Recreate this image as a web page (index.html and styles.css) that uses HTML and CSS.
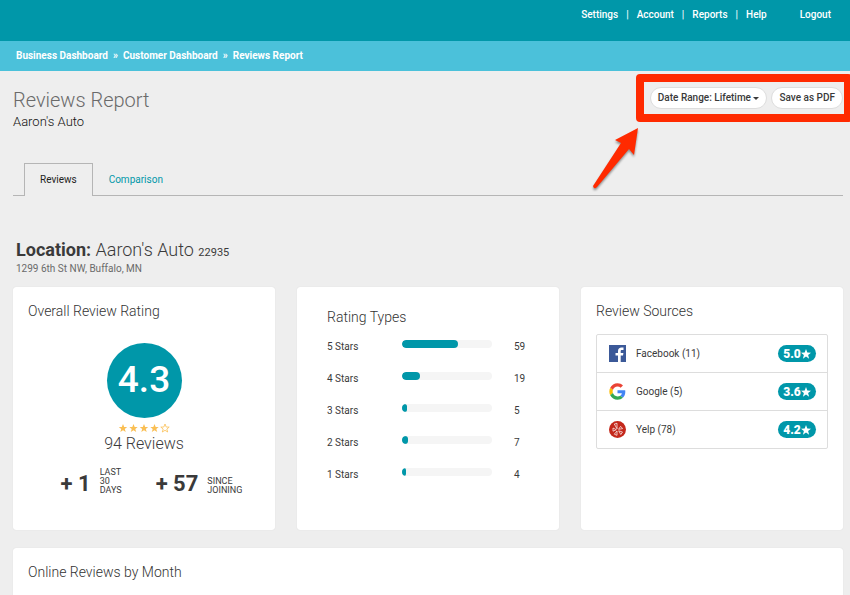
FILE: index.html
```html
<!DOCTYPE html>
<html lang="en">
<head>
  <meta charset="UTF-8">
  <meta name="viewport" content="width=device-width, initial-scale=1.0">
  <title>Reviews Report</title>
  <link rel="stylesheet" href="styles.css">
</head>
<body>
  <header class="topbar">
    <nav class="topnav">
      <a href="#">Settings</a><span>|</span>
      <a href="#">Account</a><span>|</span>
      <a href="#">Reports</a><span>|</span>
      <a href="#">Help</a>
    </nav>
    <a class="logout" href="#">Logout</a>
  </header>
  <nav class="breadcrumb">
    <a href="#">Business Dashboard</a><span>»</span>
    <a href="#">Customer Dashboard</a><span>»</span>
    <a href="#">Reviews Report</a>
  </nav>

  <main class="page">
    <div class="page-head">
      <div>
        <h1>Reviews Report</h1>
        <p class="business">Aaron's Auto</p>
      </div>
      <div class="actions">
        <button class="pill" type="button">Date Range: Lifetime <i class="caret"></i></button>
        <button class="pill" type="button">Save as PDF</button>
        <div class="highlight"></div>
        <svg class="arrow" width="54" height="70" viewBox="0 0 54 70">
          <path d="M49 3 L26 15 L32 18 L4 61 Q5 65 8 62 L40 24 L45 30 Z" fill="#ff2a00"/>
        </svg>
      </div>
    </div>

    <nav class="tabs">
      <a class="tab active" href="#">Reviews</a>
      <a class="tab" href="#">Comparison</a>
    </nav>

    <div class="location">
      <h2><b>Location:</b> Aaron's Auto <small>22935</small></h2>
      <p>1299 6th St NW, Buffalo, MN</p>
    </div>

    <div class="cards">
      <section class="card overall">
        <h3>Overall Review Rating</h3>
        <div class="score">4.3</div>
        <svg class="stars" width="52" height="10" viewBox="0 0 52 10">
          <defs>
            <path id="star" d="M5 1 L6.2 4 L9.2 4.1 L6.8 6 L7.7 9 L5 7.3 L2.3 9 L3.2 6 L0.8 4.1 L3.8 4 Z"/>
          </defs>
          <g fill="#fabf54">
            <use href="#star"/>
            <use href="#star" x="10.5"/>
            <use href="#star" x="21"/>
            <use href="#star" x="31.5"/>
          </g>
          <use href="#star" x="42" fill="none" stroke="#fabf54" stroke-width="0.8"/>
        </svg>
        <p class="total">94 Reviews</p>
        <div class="gains">
          <div class="gain"><strong>+ 1</strong><span>LAST<br>30<br>DAYS</span></div>
          <div class="gain"><strong>+ 57</strong><span>SINCE<br>JOINING</span></div>
        </div>
      </section>

      <section class="card types">
        <h3>Rating Types</h3>
        <table>
          <tr><th>5 Stars</th><td><div class="bar"><div style="width: 62%"></div></div></td><td>59</td></tr>
          <tr><th>4 Stars</th><td><div class="bar"><div style="width: 20%"></div></div></td><td>19</td></tr>
          <tr><th>3 Stars</th><td><div class="bar"><div style="width: 5%"></div></div></td><td>5</td></tr>
          <tr><th>2 Stars</th><td><div class="bar"><div style="width: 7%"></div></div></td><td>7</td></tr>
          <tr><th>1 Stars</th><td><div class="bar"><div style="width: 4%"></div></div></td><td>4</td></tr>
        </table>
      </section>

      <section class="card">
        <h3>Review Sources</h3>
        <ul class="sources">
          <li>
            <svg width="17" height="17" viewBox="0 0 17 17">
              <rect width="17" height="17" fill="#3b5998"/>
              <path d="M9 17 V10.5 H6.5 V8 H9 V6 C9 3.7 10.4 2.5 12.5 2.5 L14.5 2.6 V5 H13 C12 5 11.7 5.5 11.7 6.3 V8 H14.4 L14 10.5 H11.7 V17 Z" fill="#fff"/>
            </svg>
            <span class="name">Facebook (11)</span>
            <span class="badge">5.0<svg width="10" height="10" viewBox="0 0 10 10"><path d="M5 0 L6.3 3.5 L10 3.7 L7.1 6 L8.1 9.7 L5 7.6 L1.9 9.7 L2.9 6 L0 3.7 L3.7 3.5 Z" fill="#fff"/></svg></span>
          </li>
          <li>
            <svg width="17" height="17" viewBox="-1 -1 50 50">
              <path fill="#ea4335" d="M24 9.5c3.5 0 6.700 1.200 9.200 3.600l6.900-6.900C35.900 2.400 30.500 0 24 0 14.600 0 6.500 5.400 2.600 13.200l8 6.200C12.400 13.700 17.700 9.500 24 9.500z"/>
              <path fill="#4285f4" d="M47 24.500c0-1.600-.2-3.100-.4-4.500H24v9h12.900c-.6 3-2.200 5.500-4.700 7.200l7.700 6C44.400 38 47 31.800 47 24.500z"/>
              <path fill="#fbbc05" d="M10.500 28.600c-.5-1.500-.8-3-.8-4.600s.3-3.100.8-4.600l-8-6.200C.9 16.500 0 20.100 0 24s.9 7.500 2.600 10.800z"/>
              <path fill="#34a853" d="M24 48c6.500 0 11.900-2.100 15.900-5.800l-7.700-6c-2.200 1.500-4.900 2.300-8.200 2.300-6.300 0-11.600-4.200-13.500-9.900l-8 6.200C6.500 42.600 14.600 48 24 48z"/>
            </svg>
            <span class="name">Google (5)</span>
            <span class="badge">3.6<svg width="10" height="10" viewBox="0 0 10 10"><path d="M5 0 L6.3 3.5 L10 3.7 L7.1 6 L8.1 9.7 L5 7.6 L1.9 9.7 L2.9 6 L0 3.7 L3.7 3.5 Z" fill="#fff"/></svg></span>
          </li>
          <li>
            <svg width="17" height="17" viewBox="0 0 17 17">
              <circle cx="8.500" cy="8.500" r="8.500" fill="#c4281b"/>
              <g fill="none" stroke="#fff" stroke-width="0.7" stroke-linejoin="round">
                <path d="M5.300 3 L8 2.300 V7.800 Z"/>
                <path d="M4 7 L7.300 8.700 L4 10.200 Z"/>
                <path d="M8 10 V14.300 L5.300 13.200 Z"/>
                <path d="M9.700 9.800 L13.500 11 L11.800 13.500 Z"/>
                <path d="M9.600 8.300 L11.600 5.300 L13.600 7.600 Z"/>
              </g>
            </svg>
            <span class="name">Yelp (78)</span>
            <span class="badge">4.2<svg width="10" height="10" viewBox="0 0 10 10"><path d="M5 0 L6.3 3.5 L10 3.7 L7.1 6 L8.1 9.7 L5 7.6 L1.9 9.7 L2.9 6 L0 3.7 L3.7 3.5 Z" fill="#fff"/></svg></span>
          </li>
        </ul>
      </section>
    </div>

    <section class="card monthly">
      <h3>Online Reviews by Month</h3>
    </section>
  </main>
</body>
</html>
```
FILE: styles.css
```css
* {
  box-sizing: border-box;
  padding: 0;
  margin: 0;
}
body {
  display: flex;
  flex-direction: column;
  min-height: 100vh;
  overflow-x: hidden;
  background: #eee;
  color: #3a3a3a;
  font: 10px/16px Roboto, "Liberation Sans", sans-serif;
}
a {
  color: inherit;
  text-decoration: none;
}

/* header */
.topbar {
  display: flex;
  justify-content: flex-end;
  gap: 33px;
  height: 41px;
  padding: 7px 19px 0 0;
  background: #0097a9;
  color: #fff;
  font-weight: 500;
}
.topnav {
  display: flex;
  gap: 8px;
}
.breadcrumb {
  display: flex;
  align-items: center;
  gap: 5px;
  height: 30px;
  padding-left: 16px;
  background: #4bc1da;
  color: #fff;
  font-weight: 700;
}

.page {
  display: flex;
  flex-direction: column;
  flex: 1;
  padding: 16px 7px 0 13px;
}
.page-head {
  display: flex;
  justify-content: space-between;
  height: 76px;
}
h1 {
  color: #6a6a6a;
  font-size: 20px;
  font-weight: 300;
  line-height: 27px;
}
.business {
  color: #111;
  font-size: 13px;
  font-weight: 300;
}
.actions {
  position: relative;
  display: flex;
  align-items: flex-start;
  gap: 4px;
}
.pill {
  height: 22px;
  padding: 0 7px;
  border: 1px solid #ddd;
  border-radius: 11px;
  background: #fff;
  color: #3a3a3a;
  font: 500 10px/16px Roboto, "Liberation Sans", sans-serif;
}
.caret {
  display: inline-block;
  border: 3px solid transparent;
  border-top-color: #3a3a3a;
  border-bottom: 0;
  vertical-align: middle;
}
.highlight {
  position: absolute;
  top: -13px;
  left: -14px;
  right: -9px;
  height: 48px;
  border: 8px solid #ff2a00;
  border-radius: 4px;
  pointer-events: none;
}
.arrow {
  position: absolute;
  top: 38px;
  left: -61px;
  filter: drop-shadow(0 2px 1px rgba(0, 0, 0, .4));
}

.tabs {
  display: flex;
  height: 33px;
  padding-left: 11px;
  border-bottom: 1px solid #b5b5b5;
}
.tab {
  height: 33px;
  padding: 9px 16px 0;
  color: #0097a9;
}
.tab.active {
  padding: 8px 15px 0;
  border: 1px solid #b5b5b5;
  border-bottom: 0;
  background: #eee;
  color: #222;
}

.location {
  padding: 42px 3px 12px;
  color: #6a6a6a;
}
h2 {
  color: #3a3a3a;
  font-size: 18px;
  font-weight: 300;
  line-height: 24px;
}
h2 b {
  font-weight: 700;
}
h2 small {
  font-size: 11px;
  font-weight: 400;
  line-height: 11px;
}
.location p {
  line-height: 13px;
}

/* cards */
.cards {
  display: grid;
  grid-template-columns: repeat(3, 1fr);
  gap: 22px;
  margin-bottom: 18px;
}
.card {
  min-height: 243px;
  padding: 15px;
  border-radius: 3px;
  background: #fff;
  box-shadow: 0 0 1px rgba(0, 0, 0, .15);
}
h3 {
  color: #333;
  font-size: 14px;
  font-weight: 300;
  line-height: 18px;
}
.overall {
  display: flex;
  flex-direction: column;
  align-items: center;
}
.overall h3 {
  align-self: flex-start;
}
.score {
  width: 75px;
  height: 75px;
  margin: 23px 0 5px;
  border-radius: 50%;
  background: #0097a9;
  color: #fff;
  font-size: 37px;
  font-weight: 500;
  line-height: 73px;
  text-align: center;
}
.total {
  margin: 1px 0 14px;
  font-size: 16px;
  font-weight: 300;
  line-height: 20px;
}
.gains {
  display: flex;
  gap: 34px;
  padding-left: 15px;
}
.gain {
  display: flex;
  align-items: flex-end;
  gap: 9px;
}
.gain strong {
  font-size: 22px;
  line-height: 22px;
}
.gain span {
  font-size: 9px;
  line-height: 9px;
}

.types {
  padding: 21px 30px;
}
.types table {
  width: 100%;
  margin-top: 4px;
  border-collapse: collapse;
}
.types tr {
  height: 32px;
  vertical-align: top;
}
.types th {
  width: 75px;
  padding-top: 9px;
  font-weight: 400;
  text-align: left;
}
.types td:last-child {
  width: 37px;
  padding: 9px 0 0 22px;
}
.bar {
  height: 8px;
  margin-top: 10px;
  border-radius: 4px;
  background: #f5f5f5;
  overflow: hidden;
}
.bar div {
  height: 8px;
  border-radius: 4px;
  background: #0097a9;
}

.sources {
  margin-top: 14px;
  border: 1px solid #ddd;
  border-radius: 2px;
  list-style: none;
}
.sources li {
  display: flex;
  align-items: center;
  height: 37px;
  padding: 0 11px 0 12px;
}
.sources li + li {
  height: 38px;
  border-top: 1px solid #ddd;
}
.name {
  flex: 1;
  padding-left: 10px;
}
.badge {
  display: flex;
  align-items: center;
  justify-content: center;
  width: 38px;
  height: 17px;
  border-radius: 9px;
  background: #0097a9;
  color: #fff;
  font-size: 12px;
  font-weight: 900;
}
.monthly {
  flex: 1;
  min-height: 47px;
  padding-bottom: 0;
  border-radius: 3px 3px 0 0;
}
```
